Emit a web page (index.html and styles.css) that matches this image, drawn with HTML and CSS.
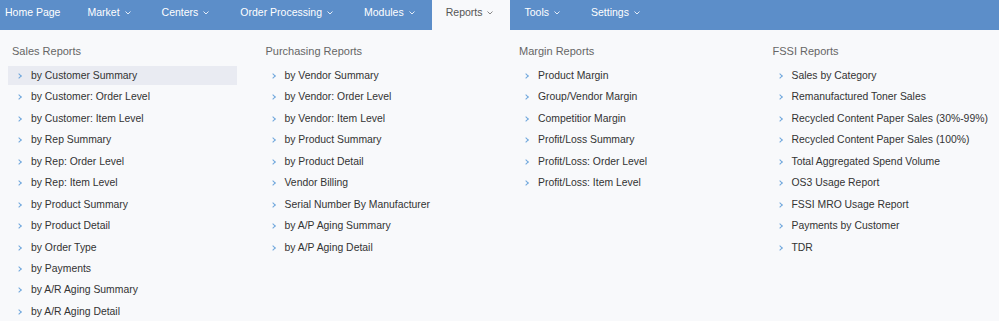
FILE: index.html
```html
<!DOCTYPE html>
<html lang="en">
<head>
    <meta charset="UTF-8">
    <meta name="viewport" content="width=device-width, initial-scale=1.0">
    <title>Reports</title>
    <link rel="stylesheet" href="styles.css">
</head>
<body>

    <nav class="topnav">
        <a class="nav-item">Home Page</a>
        <a class="nav-item">Market<span class="caret"><svg width="6" height="4" viewBox="0 0 6 4"><polyline points="0.5,0.5 3,3 5.5,0.5"/></svg></span></a>
        <a class="nav-item">Centers<span class="caret"><svg width="6" height="4" viewBox="0 0 6 4"><polyline points="0.5,0.5 3,3 5.5,0.5"/></svg></span></a>
        <a class="nav-item">Order Processing<span class="caret"><svg width="6" height="4" viewBox="0 0 6 4"><polyline points="0.5,0.5 3,3 5.5,0.5"/></svg></span></a>
        <a class="nav-item">Modules<span class="caret"><svg width="6" height="4" viewBox="0 0 6 4"><polyline points="0.5,0.5 3,3 5.5,0.5"/></svg></span></a>
        <a class="nav-item active">Reports<span class="caret"><svg width="6" height="4" viewBox="0 0 6 4"><polyline points="0.5,0.5 3,3 5.5,0.5"/></svg></span></a>
        <a class="nav-item">Tools<span class="caret"><svg width="6" height="4" viewBox="0 0 6 4"><polyline points="0.5,0.5 3,3 5.5,0.5"/></svg></span></a>
        <a class="nav-item">Settings<span class="caret"><svg width="6" height="4" viewBox="0 0 6 4"><polyline points="0.5,0.5 3,3 5.5,0.5"/></svg></span></a>
    </nav>

    <div class="mega-menu">
        <div class="menu-col">
            <h4>Sales Reports</h4>
            <ul>
                <li class="hover">by Customer Summary</li>
                <li>by Customer: Order Level</li>
                <li>by Customer: Item Level</li>
                <li>by Rep Summary</li>
                <li>by Rep: Order Level</li>
                <li>by Rep: Item Level</li>
                <li>by Product Summary</li>
                <li>by Product Detail</li>
                <li>by Order Type</li>
                <li>by Payments</li>
                <li>by A/R Aging Summary</li>
                <li>by A/R Aging Detail</li>
            </ul>
        </div>
        <div class="menu-col">
            <h4>Purchasing Reports</h4>
            <ul>
                <li>by Vendor Summary</li>
                <li>by Vendor: Order Level</li>
                <li>by Vendor: Item Level</li>
                <li>by Product Summary</li>
                <li>by Product Detail</li>
                <li>Vendor Billing</li>
                <li>Serial Number By Manufacturer</li>
                <li>by A/P Aging Summary</li>
                <li>by A/P Aging Detail</li>
            </ul>
        </div>
        <div class="menu-col">
            <h4>Margin Reports</h4>
            <ul>
                <li>Product Margin</li>
                <li>Group/Vendor Margin</li>
                <li>Competitior Margin</li>
                <li>Profit/Loss Summary</li>
                <li>Profit/Loss: Order Level</li>
                <li>Profit/Loss: Item Level</li>
            </ul>
        </div>
        <div class="menu-col">
            <h4>FSSI Reports</h4>
            <ul>
                <li>Sales by Category</li>
                <li>Remanufactured Toner Sales</li>
                <li>Recycled Content Paper Sales (30%-99%)</li>
                <li>Recycled Content Paper Sales (100%)</li>
                <li>Total Aggregated Spend Volume</li>
                <li>OS3 Usage Report</li>
                <li>FSSI MRO Usage Report</li>
                <li>Payments by Customer</li>
                <li>TDR</li>
            </ul>
        </div>
    </div>

</body>
</html>
```

FILE: styles.css
```css
body {
    margin: 0;
    font-family: "Liberation Sans", Arial, sans-serif;
    background-color: #f8f9fb;
}

/* Top navigation */
.topnav {
    display: flex;
    height: 30px;
    background-color: #5c8ec9;
}
.nav-item {
    display: flex;
    align-items: flex-start;
    height: 30px;
    padding: 0 14px;
    line-height: 25px;
    font-size: 10.5px;
    color: #fff;
    white-space: nowrap;
    cursor: pointer;
}
.nav-item:first-child {
    padding-left: 5px;
    padding-right: 13px;
}
.nav-item.active {
    background-color: #f8f9fb;
    color: #555;
}
.caret {
    display: inline-flex;
    align-items: center;
    height: 25px;
    width: 6px;
    margin: 0 3px 0 5px;
}
.caret svg {
    margin-top: 1px;
}
.caret polyline {
    fill: none;
    stroke: #e4ecf7;
    stroke-width: 1;
}
.active .caret polyline {
    stroke: #888;
}

/* Dropdown panel */
.mega-menu {
    display: grid;
    grid-template-columns: repeat(4, 253.5px);
    padding: 11px 0 0 8px;
    background-color: #f8f9fb;
}
.menu-col h4 {
    margin: 0 0 5px;
    padding-left: 4px;
    height: 20px;
    line-height: 20px;
    font-size: 11px;
    font-weight: normal;
    color: #666;
}
.menu-col ul {
    list-style: none;
    margin: 0;
    padding: 0;
}
.menu-col li {
    display: flex;
    align-items: center;
    width: 229px;
    height: 19px;
    margin-bottom: 2.45px;
    padding-left: 9px;
    box-sizing: border-box;
    font-size: 10.4px;
    color: #333;
    white-space: nowrap;
}
.menu-col li::before {
    content: "";
    width: 3px;
    height: 3px;
    margin: 1px 10px 0 0;
    border-top: 1.2px solid #6ea6dc;
    border-right: 1.2px solid #6ea6dc;
    transform: rotate(45deg);
}
.menu-col li.hover {
    background-color: #e9ebf2;
}
```
